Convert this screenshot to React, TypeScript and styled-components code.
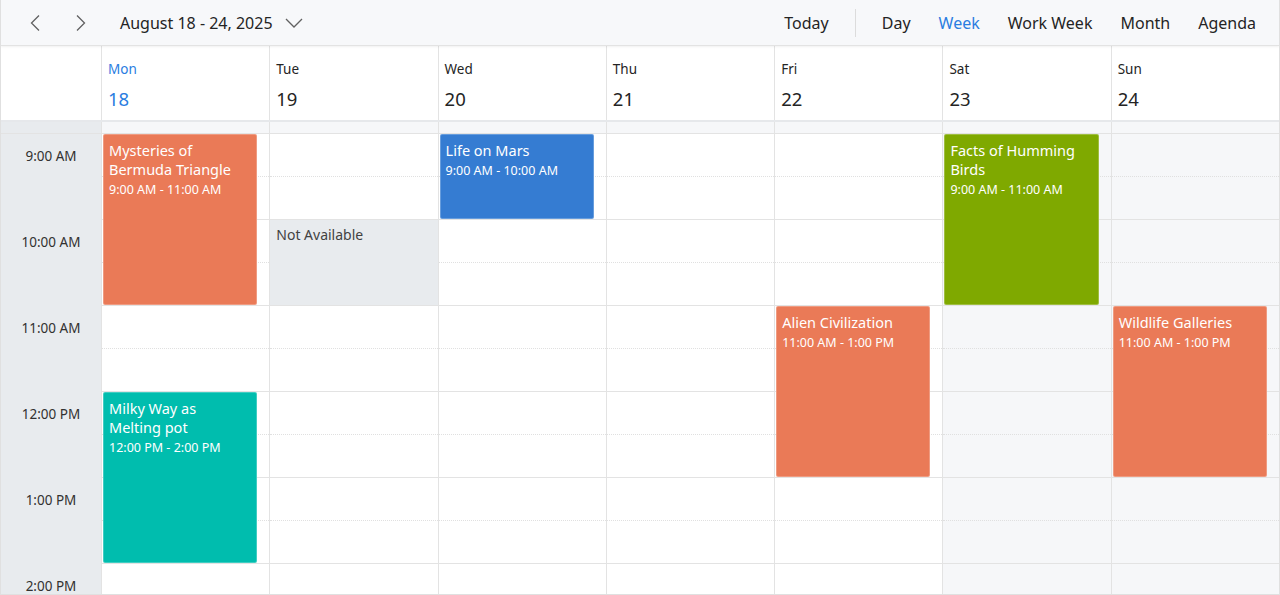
import React from 'react'
import styled, { createGlobalStyle } from 'styled-components'

const GlobalStyle = createGlobalStyle`
  html, body {
    margin: 0;
    padding: 0;
    background: #ffffff;
  }
  body {
    font-family: 'Noto Sans', 'Open Sans', sans-serif;
    color: #242424;
  }
`

const HOUR = 86
const START_HOUR = 9
const HOURS = [9, 10, 11, 12, 13, 14]
const BLUE = '#2a7de1'

type Day = { name: string; date: number; weekend?: boolean; today?: boolean }

const DAYS: Day[] = [
  { name: 'Mon', date: 18, today: true },
  { name: 'Tue', date: 19 },
  { name: 'Wed', date: 20 },
  { name: 'Thu', date: 21 },
  { name: 'Fri', date: 22 },
  { name: 'Sat', date: 23, weekend: true },
  { name: 'Sun', date: 24, weekend: true },
]

type Appointment = { day: number; title: string; time: string; start: number; end: number; color: string }

const APPOINTMENTS: Appointment[] = [
  { day: 0, title: 'Mysteries of Bermuda Triangle', time: '9:00 AM - 11:00 AM', start: 9, end: 11, color: '#ea7a57' },
  { day: 0, title: 'Milky Way as Melting pot', time: '12:00 PM - 2:00 PM', start: 12, end: 14, color: '#00bdae' },
  { day: 2, title: 'Life on Mars', time: '9:00 AM - 10:00 AM', start: 9, end: 10, color: '#357cd2' },
  { day: 4, title: 'Alien Civilization', time: '11:00 AM - 1:00 PM', start: 11, end: 13, color: '#ea7a57' },
  { day: 5, title: 'Facts of Humming Birds', time: '9:00 AM - 11:00 AM', start: 9, end: 11, color: '#7fa900' },
  { day: 6, title: 'Wildlife Galleries', time: '11:00 AM - 1:00 PM', start: 11, end: 13, color: '#ea7a57' },
]

const BLOCKS = [{ day: 1, start: 10, end: 11, label: 'Not Available' }]

const formatHour = (h: number) => `${h > 12 ? h - 12 : h}:00 ${h >= 12 ? 'PM' : 'AM'}`

const Schedule = styled.div`
  width: 1280px;
  height: 595px;
  box-sizing: border-box;
  border: 1px solid #e0e0e0;
  border-top: none;
  display: flex;
  flex-direction: column;
  overflow: hidden;
`

const Toolbar = styled.div`
  height: 45px;
  flex-shrink: 0;
  display: flex;
  align-items: center;
  justify-content: space-between;
  background: #f7f8fa;
  border-bottom: 1px solid #e3e3e3;
  box-shadow: 0 1px 2px rgba(0, 0, 0, 0.06);
  position: relative;
  z-index: 2;
  padding: 0 9px 0 11px;
`

const ToolGroup = styled.div`
  display: flex;
  align-items: center;
`

const IconButton = styled.button`
  width: 46px;
  height: 36px;
  border: none;
  background: transparent;
  display: flex;
  align-items: center;
  justify-content: center;
  padding: 0;
  cursor: pointer;
`

const DateRange = styled.button`
  display: flex;
  align-items: center;
  gap: 12px;
  margin-left: 16px;
  border: none;
  background: transparent;
  font: inherit;
  font-size: 16px;
  color: #242424;
  padding: 0;
`

const ViewButton = styled.button<{ $active?: boolean }>`
  border: none;
  background: transparent;
  font: inherit;
  font-size: 16px;
  padding: 0 14px;
  height: 36px;
  color: ${p => (p.$active ? BLUE : '#242424')};
  cursor: pointer;
`

const Separator = styled.div`
  width: 1px;
  height: 28px;
  background: #dcdcdc;
  margin: 0 12px;
`

const HeaderRow = styled.div`
  display: grid;
  grid-template-columns: 100px repeat(7, 1fr);
  height: 74px;
  flex-shrink: 0;
  border-bottom: 2px solid #e6e8eb;
`

const CornerCell = styled.div`
  background: #ffffff;
`

const DayHeader = styled.div<{ $today?: boolean }>`
  border-left: 1px solid #e3e3e3;
  padding: 13px 6px 0;
  color: ${p => (p.$today ? BLUE : '#242424')};
`

const DayName = styled.div`
  font-size: 13.5px;
  line-height: 20px;
`

const DayDate = styled.div`
  font-size: 18.5px;
  line-height: 26px;
  margin-top: 7px;
`

const AllDayRow = styled.div`
  display: grid;
  grid-template-columns: 100px repeat(7, 1fr);
  height: 11px;
  flex-shrink: 0;
  border-bottom: 1px solid #e3e3e3;
`

const AllDayTime = styled.div`
  background: #e8ebee;
`

const AllDayCell = styled.div`
  border-left: 1px solid #e3e3e3;
  background: #f6f7f9;
`

const Body = styled.div`
  flex: 1;
  display: grid;
  grid-template-columns: 100px repeat(7, 1fr);
  overflow: hidden;
  align-items: start;
`

const TimeColumn = styled.div`
  background: #e8ebee;
  align-self: stretch;
`

const TimeLabel = styled.div`
  height: ${HOUR}px;
  box-sizing: border-box;
  padding-top: 12px;
  text-align: center;
  font-size: 13.5px;
  line-height: 20px;
  color: #323130;
`

const DayColumn = styled.div<{ $weekend?: boolean }>`
  position: relative;
  border-left: 1px solid #e3e3e3;
  background: ${p => (p.$weekend ? '#f6f7f9' : '#ffffff')};
`

const Slot = styled.div<{ $half?: boolean }>`
  height: ${HOUR / 2}px;
  box-sizing: border-box;
  border-bottom: 1px ${p => (p.$half ? 'dotted #e0e0e0' : 'solid #e3e3e3')};
`

const BlockedTime = styled.div`
  position: absolute;
  left: 0;
  right: 0;
  background: #e8ebee;
  padding: 5px 6px;
  box-sizing: border-box;
  font-size: 14px;
  line-height: 20px;
  color: #424242;
`

const Event = styled.div<{ $color: string }>`
  position: absolute;
  left: 1px;
  right: 12px;
  box-sizing: border-box;
  background: ${p => p.$color};
  border: 1px solid rgba(255, 255, 255, 0.25);
  border-radius: 2px;
  color: #ffffff;
  padding: 6px 5px;
  overflow: hidden;
`

const EventTitle = styled.div`
  font-size: 14.5px;
  line-height: 19px;
`

const EventTime = styled.div`
  font-size: 12.5px;
  line-height: 18px;
  margin-top: 2px;
`

const ChevronLeft = () => (
  <svg width="12" height="18" viewBox="0 0 12 18" fill="none">
    <polyline points="10,1.5 2.5,9 10,16.5" stroke="#616161" strokeWidth="1.3" />
  </svg>
)

const ChevronRight = () => (
  <svg width="12" height="18" viewBox="0 0 12 18" fill="none">
    <polyline points="2,1.5 9.5,9 2,16.5" stroke="#616161" strokeWidth="1.3" />
  </svg>
)

const ChevronDown = () => (
  <svg width="18" height="10" viewBox="0 0 18 10" fill="none">
    <polyline points="1,1 9,9 17,1" stroke="#616161" strokeWidth="1.3" />
  </svg>
)

const App = () => (
  <>
    <GlobalStyle />
    <Schedule>
      <Toolbar>
        <ToolGroup>
          <IconButton aria-label="Previous"><ChevronLeft /></IconButton>
          <IconButton aria-label="Next"><ChevronRight /></IconButton>
          <DateRange>
            August 18 - 24, 2025
            <ChevronDown />
          </DateRange>
        </ToolGroup>
        <ToolGroup>
          <ViewButton>Today</ViewButton>
          <Separator />
          <ViewButton>Day</ViewButton>
          <ViewButton $active>Week</ViewButton>
          <ViewButton>Work Week</ViewButton>
          <ViewButton>Month</ViewButton>
          <ViewButton>Agenda</ViewButton>
        </ToolGroup>
      </Toolbar>

      <HeaderRow>
        <CornerCell />
        {DAYS.map(d => (
          <DayHeader key={d.name} $today={d.today}>
            <DayName>{d.name}</DayName>
            <DayDate>{d.date}</DayDate>
          </DayHeader>
        ))}
      </HeaderRow>

      <AllDayRow>
        <AllDayTime />
        {DAYS.map(d => <AllDayCell key={d.name} />)}
      </AllDayRow>

      <Body>
        <TimeColumn>
          {HOURS.map(h => <TimeLabel key={h}>{formatHour(h)}</TimeLabel>)}
        </TimeColumn>
        {DAYS.map((d, i) => (
          <DayColumn key={d.name} $weekend={d.weekend}>
            {HOURS.map(h => (
              <React.Fragment key={h}>
                <Slot $half />
                <Slot />
              </React.Fragment>
            ))}
            {BLOCKS.filter(b => b.day === i).map(b => (
              <BlockedTime
                key={b.label}
                style={{ top: (b.start - START_HOUR) * HOUR, height: (b.end - b.start) * HOUR - 1 }}
              >
                {b.label}
              </BlockedTime>
            ))}
            {APPOINTMENTS.filter(a => a.day === i).map(a => (
              <Event
                key={a.title}
                $color={a.color}
                style={{ top: (a.start - START_HOUR) * HOUR, height: (a.end - a.start) * HOUR - 1 }}
              >
                <EventTitle>{a.title}</EventTitle>
                <EventTime>{a.time}</EventTime>
              </Event>
            ))}
          </DayColumn>
        ))}
      </Body>
    </Schedule>
  </>
)

export default App
